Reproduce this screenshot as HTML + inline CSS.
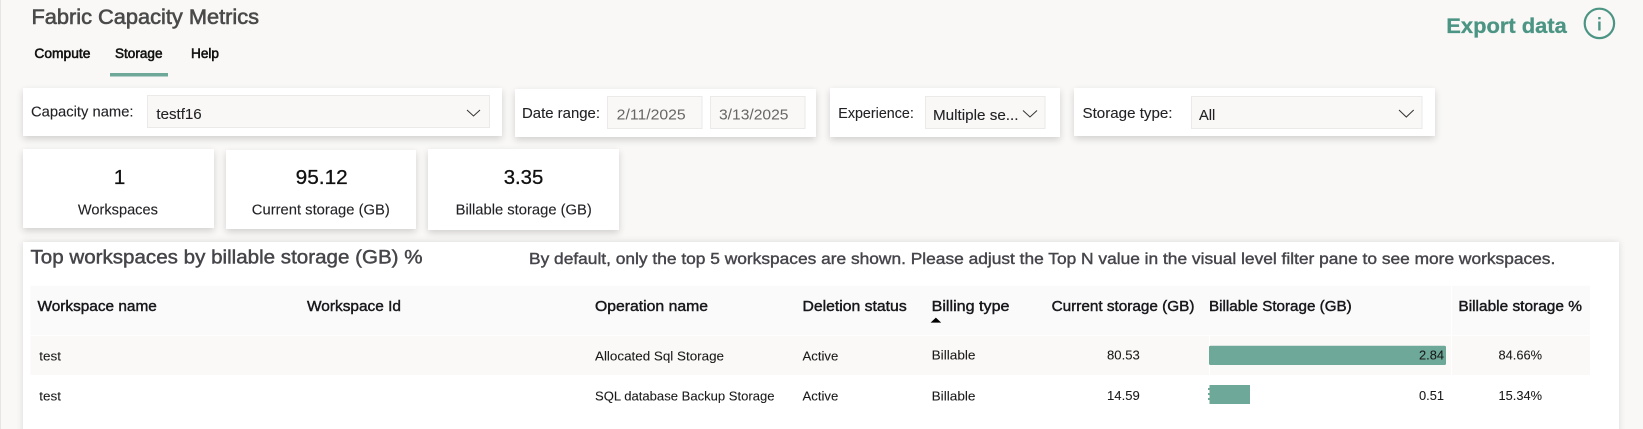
<!DOCTYPE html>
<html lang="en">
<head>
<meta charset="utf-8">
<title>Fabric Capacity Metrics</title>
<style>
html,body{margin:0;padding:0;width:1643px;height:429px;overflow:hidden;background:#f9f8f6;}
#p{position:relative;width:1643px;height:429px;overflow:hidden;background:#f9f8f6;}
.b{position:absolute;background:#fff;box-shadow:0 3px 7px rgba(0,0,0,.16);}
svg{position:absolute;left:0;top:0;}
text{font-family:"Liberation Sans",sans-serif;white-space:pre;}
.t{fill:#222226;stroke:#222226;stroke-width:.1px;font-size:14.5px;}
.s{stroke:#111;stroke-width:.55px;fill:#111;font-size:13.5px;}
.h{fill:#17171c;stroke:#17171c;stroke-width:.42px;font-size:14.5px;}
.r{fill:#1a1a1a;stroke:#1a1a1a;stroke-width:.08px;font-size:13px;}
.d{fill:#666;font-size:14.5px;}
.k{fill:#111;stroke:#111;stroke-width:.3px;font-size:20.5px;}
</style>
</head>
<body>
<div id="p">
<div style="position:absolute;left:0;top:0;width:1px;height:429px;background:#e6e5e3;"></div>
<div class="b" style="left:23px;top:88px;width:479px;height:48px;"></div>
<div class="b" style="left:515px;top:89px;width:301px;height:48px;"></div>
<div class="b" style="left:830px;top:88px;width:230px;height:49px;"></div>
<div class="b" style="left:1074px;top:88px;width:361px;height:48px;"></div>
<div class="b" style="left:23px;top:149px;width:191px;height:79px;"></div>
<div class="b" style="left:226px;top:150px;width:190px;height:79px;"></div>
<div class="b" style="left:428px;top:149px;width:191px;height:81px;"></div>
<div class="b" style="left:23px;top:242px;width:1596px;height:200px;box-shadow:0 0 7px rgba(0,0,0,.12);"></div>

<svg width="1643" height="429" viewBox="0 0 1643 429" xmlns="http://www.w3.org/2000/svg">
  <!-- header -->
  <text x="31.5" y="24" font-size="21" fill="#4a4a4a" stroke="#4a4a4a" stroke-width=".6" textLength="227.5" lengthAdjust="spacingAndGlyphs">Fabric Capacity Metrics</text>
  <text x="34.4" y="58" class="s" textLength="56" lengthAdjust="spacingAndGlyphs">Compute</text>
  <text x="115" y="58" class="s" textLength="47.5" lengthAdjust="spacingAndGlyphs">Storage</text>
  <text x="191" y="58" class="s" textLength="28" lengthAdjust="spacingAndGlyphs">Help</text>
  <rect x="110" y="73" width="58" height="3.5" fill="#6ea899"/>

  <text x="1446.3" y="33" font-size="21" font-weight="700" fill="#4c9584" stroke="#4c9584" stroke-width=".3" textLength="120.5" lengthAdjust="spacingAndGlyphs">Export data</text>
  <circle cx="1599.4" cy="23.4" r="14.7" fill="none" stroke="#4c9584" stroke-width="2.2"/>
  <rect x="1598.2" y="21.5" width="2.4" height="9" fill="#4c9584"/>
  <rect x="1598.2" y="17" width="2.4" height="2.4" fill="#4c9584"/>

  <!-- filters -->
  <text x="31" y="116.5" class="t" textLength="102.5" lengthAdjust="spacingAndGlyphs">Capacity name:</text>
  <rect x="147.5" y="95.5" width="342" height="32" fill="#f9f8f6" stroke="#ebeae8"/>
  <text x="156.4" y="119" class="t" textLength="45.3" lengthAdjust="spacingAndGlyphs">testf16</text>
  <path d="M467 110 L473.5 116 L480 110" fill="none" stroke="#333" stroke-width="1"/>

  <text x="522" y="118" class="t" textLength="78" lengthAdjust="spacingAndGlyphs">Date range:</text>
  <rect x="607.5" y="96.5" width="94.5" height="32" fill="#f9f8f6" stroke="#ebeae8"/>
  <rect x="710.5" y="96.5" width="94.5" height="32" fill="#f9f8f6" stroke="#ebeae8"/>
  <text x="616.7" y="119.5" class="d" textLength="69" lengthAdjust="spacingAndGlyphs">2/11/2025</text>
  <text x="719" y="119.5" class="d" textLength="69.5" lengthAdjust="spacingAndGlyphs">3/13/2025</text>

  <text x="838.3" y="118" class="t" textLength="75.5" lengthAdjust="spacingAndGlyphs">Experience:</text>
  <rect x="925.5" y="96.5" width="119.5" height="32" fill="#f9f8f6" stroke="#ebeae8"/>
  <text x="933" y="120" class="t" textLength="85.5" lengthAdjust="spacingAndGlyphs">Multiple se...</text>
  <path d="M1023 110.5 L1030 117 L1037 110.5" fill="none" stroke="#333" stroke-width="1"/>

  <text x="1082.5" y="118" class="t" textLength="90" lengthAdjust="spacingAndGlyphs">Storage type:</text>
  <rect x="1191.5" y="96.5" width="230.5" height="32" fill="#f9f8f6" stroke="#ebeae8"/>
  <text x="1199" y="120" class="t" textLength="16.3" lengthAdjust="spacingAndGlyphs">All</text>
  <path d="M1399 110 L1406.3 117 L1413.7 110" fill="none" stroke="#333" stroke-width="1"/>

  <!-- KPI -->
  <text x="119.6" y="184" class="k" text-anchor="middle">1</text>
  <text x="295.7" y="184" class="k" textLength="52" lengthAdjust="spacingAndGlyphs">95.12</text>
  <text x="503.7" y="184" class="k" textLength="39.6" lengthAdjust="spacingAndGlyphs">3.35</text>
  <text x="77.9" y="214.5" class="t" textLength="80" lengthAdjust="spacingAndGlyphs">Workspaces</text>
  <text x="251.8" y="214.5" class="t" textLength="138" lengthAdjust="spacingAndGlyphs">Current storage (GB)</text>
  <text x="455.6" y="214.5" class="t" textLength="136.2" lengthAdjust="spacingAndGlyphs">Billable storage (GB)</text>

  <!-- panel titles -->
  <text x="30.5" y="263.5" font-size="19.5" fill="#45454a" stroke="#45454a" stroke-width=".45" textLength="392" lengthAdjust="spacingAndGlyphs">Top workspaces by billable storage (GB) %</text>
  <text x="529" y="264" font-size="16" fill="#45454b" stroke="#45454b" stroke-width=".4" textLength="1026.3" lengthAdjust="spacingAndGlyphs">By default, only the top 5 workspaces are shown. Please adjust the Top N value in the visual level filter pane to see more workspaces.</text>

  <!-- table -->
  <rect x="30.5" y="285.7" width="1559.5" height="49.5" fill="#fafafa"/>
  <rect x="30.5" y="336" width="1559.5" height="39" fill="#faf9f7"/>
  <rect x="1451" y="285.7" width="1" height="89.3" fill="#fff"/>
  <rect x="1209" y="336" width="1" height="39" fill="#fff"/>

  <text x="37.5" y="311" class="h" textLength="119.3" lengthAdjust="spacingAndGlyphs">Workspace name</text>
  <text x="307" y="311" class="h" textLength="94" lengthAdjust="spacingAndGlyphs">Workspace Id</text>
  <text x="595" y="311" class="h" textLength="113" lengthAdjust="spacingAndGlyphs">Operation name</text>
  <text x="802.5" y="311" class="h" textLength="104.2" lengthAdjust="spacingAndGlyphs">Deletion status</text>
  <text x="931.6" y="311" class="h" textLength="77.9" lengthAdjust="spacingAndGlyphs">Billing type</text>
  <text x="1051.6" y="311" class="h" textLength="142.9" lengthAdjust="spacingAndGlyphs">Current storage (GB)</text>
  <text x="1209" y="311" class="h" textLength="142.7" lengthAdjust="spacingAndGlyphs">Billable Storage (GB)</text>
  <text x="1458.4" y="311" class="h" textLength="123.6" lengthAdjust="spacingAndGlyphs">Billable storage %</text>
  <path d="M930.6 322.6 L935.9 317.6 L941.2 322.6 Z" fill="#000"/>

  <rect x="1209" y="345.7" width="237" height="19.3" rx="1.5" fill="#6ea899"/>
  <rect x="1209.5" y="385" width="40.5" height="19" fill="#6ea899"/>
  <path d="M1208 388h2v2h-2zM1208 393h2v2h-2zM1208 398h2v2h-2z" fill="#6ea899"/>

  <text x="39.3" y="360.5" class="r" textLength="21.7" lengthAdjust="spacingAndGlyphs">test</text>
  <text x="595" y="360.5" class="r" textLength="129" lengthAdjust="spacingAndGlyphs">Allocated Sql Storage</text>
  <text x="802.5" y="360.5" class="r" textLength="35.8" lengthAdjust="spacingAndGlyphs">Active</text>
  <text x="931.6" y="359.5" class="r" textLength="43.9" lengthAdjust="spacingAndGlyphs">Billable</text>
  <text x="1107" y="359.5" class="r" textLength="32.8" lengthAdjust="spacingAndGlyphs">80.53</text>
  <text x="1419" y="359.5" class="r" textLength="25" lengthAdjust="spacingAndGlyphs">2.84</text>
  <text x="1498.5" y="359.5" class="r" textLength="43.5" lengthAdjust="spacingAndGlyphs">84.66%</text>

  <text x="39.3" y="400.5" class="r" textLength="21.7" lengthAdjust="spacingAndGlyphs">test</text>
  <text x="595" y="400.5" class="r" textLength="179.5" lengthAdjust="spacingAndGlyphs">SQL database Backup Storage</text>
  <text x="802.5" y="400.5" class="r" textLength="35.8" lengthAdjust="spacingAndGlyphs">Active</text>
  <text x="931.6" y="400.5" class="r" textLength="43.9" lengthAdjust="spacingAndGlyphs">Billable</text>
  <text x="1107" y="400" class="r" textLength="32.8" lengthAdjust="spacingAndGlyphs">14.59</text>
  <text x="1419" y="400" class="r" textLength="25" lengthAdjust="spacingAndGlyphs">0.51</text>
  <text x="1498.5" y="400" class="r" textLength="43.5" lengthAdjust="spacingAndGlyphs">15.34%</text>
</svg>
</div>
</body>
</html>
